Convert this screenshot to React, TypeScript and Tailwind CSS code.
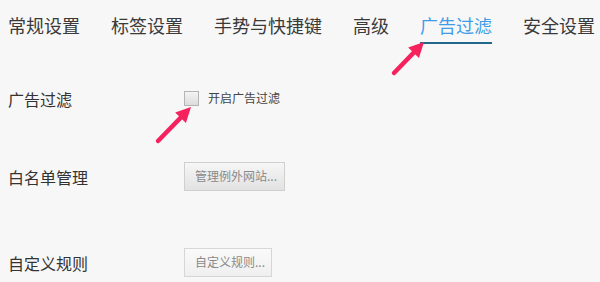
import React from 'react';

const tabs = ['常规设置', '标签设置', '手势与快捷键', '高级', '广告过滤', '安全设置'];

function Arrow({ x1, y1, x2, y2 }: { x1: number; y1: number; x2: number; y2: number }) {
  const dx = x2 - x1;
  const dy = y2 - y1;
  const len = Math.hypot(dx, dy);
  const ux = dx / len;
  const uy = dy / len;
  const hl = 15;
  const hw = 7.5;
  const bx = x2 - ux * hl;
  const by = y2 - uy * hl;
  const p1 = `${bx - uy * hw},${by + ux * hw}`;
  const p2 = `${bx + uy * hw},${by - ux * hw}`;
  return (
    <g>
      <line x1={x1} y1={y1} x2={bx + ux * 2} y2={by + uy * 2} stroke="#f5225e" strokeWidth={4.5} strokeLinecap="round" />
      <polygon points={`${x2},${y2} ${p1} ${p2}`} fill="#f5225e" />
    </g>
  );
}

export default function App() {
  return (
    <div
      className="relative w-[600px] h-[282px] overflow-hidden bg-[#f7f7f7] text-[#333]"
      style={{ fontFamily: '"Noto Sans CJK SC", "Microsoft YaHei", sans-serif' }}
    >
      <div className="flex gap-[31px] pl-[8px]">
        {tabs.map((t) => (
          <div
            key={t}
            className={
              t === '广告过滤'
                ? 'pt-[13px] pb-[5px] border-b-2 border-[#23678a] text-[18px] leading-[24px] text-[#3f9ce8]'
                : 'pt-[13px] pb-[5px] border-b-2 border-transparent text-[18px] leading-[24px] text-[#3a3a3a]'
            }
          >
            {t}
          </div>
        ))}
      </div>

      <div className="flex items-center h-[30px] mt-[40px] pl-[8px]">
        <div className="w-[176px] text-[16px] text-[#333]">广告过滤</div>
        <div className="flex items-center gap-[9px] -mt-[2px]">
          <div className="w-[15px] h-[15px] border border-[#b5b5b5] bg-gradient-to-b from-[#f4f4f4] to-[#dcdcdc]" />
          <span className="text-[12px] text-[#444]">开启广告过滤</span>
        </div>
      </div>

      <div className="flex items-center h-[30px] mt-[47px] pl-[8px]">
        <div className="w-[176px] text-[16px] text-[#333] mt-[2px]">白名单管理</div>
        <div className="w-[101px] h-[29px] flex items-center pl-[10px] border border-[#cfcfcf] bg-gradient-to-b from-[#f6f6f6] to-[#e2e2e2] text-[12px] text-[#8a8a8a]">
          管理例外网站...
        </div>
      </div>

      <div className="flex items-center h-[30px] mt-[56px] pl-[8px]">
        <div className="w-[176px] text-[16px] text-[#333] mt-[2px]">自定义规则</div>
        <div className="w-[88px] h-[29px] flex items-center pl-[10px] border border-[#d6d6d6] bg-gradient-to-b from-[#fafafa] to-[#efefef] text-[12px] text-[#8a8a8a]">
          自定义规则...
        </div>
      </div>

      <svg className="absolute inset-0 pointer-events-none" width={600} height={282}>
        <Arrow x1={394} y1={73} x2={424} y2={42} />
        <Arrow x1={158} y1={141} x2={191} y2={107} />
      </svg>
    </div>
  );
}
